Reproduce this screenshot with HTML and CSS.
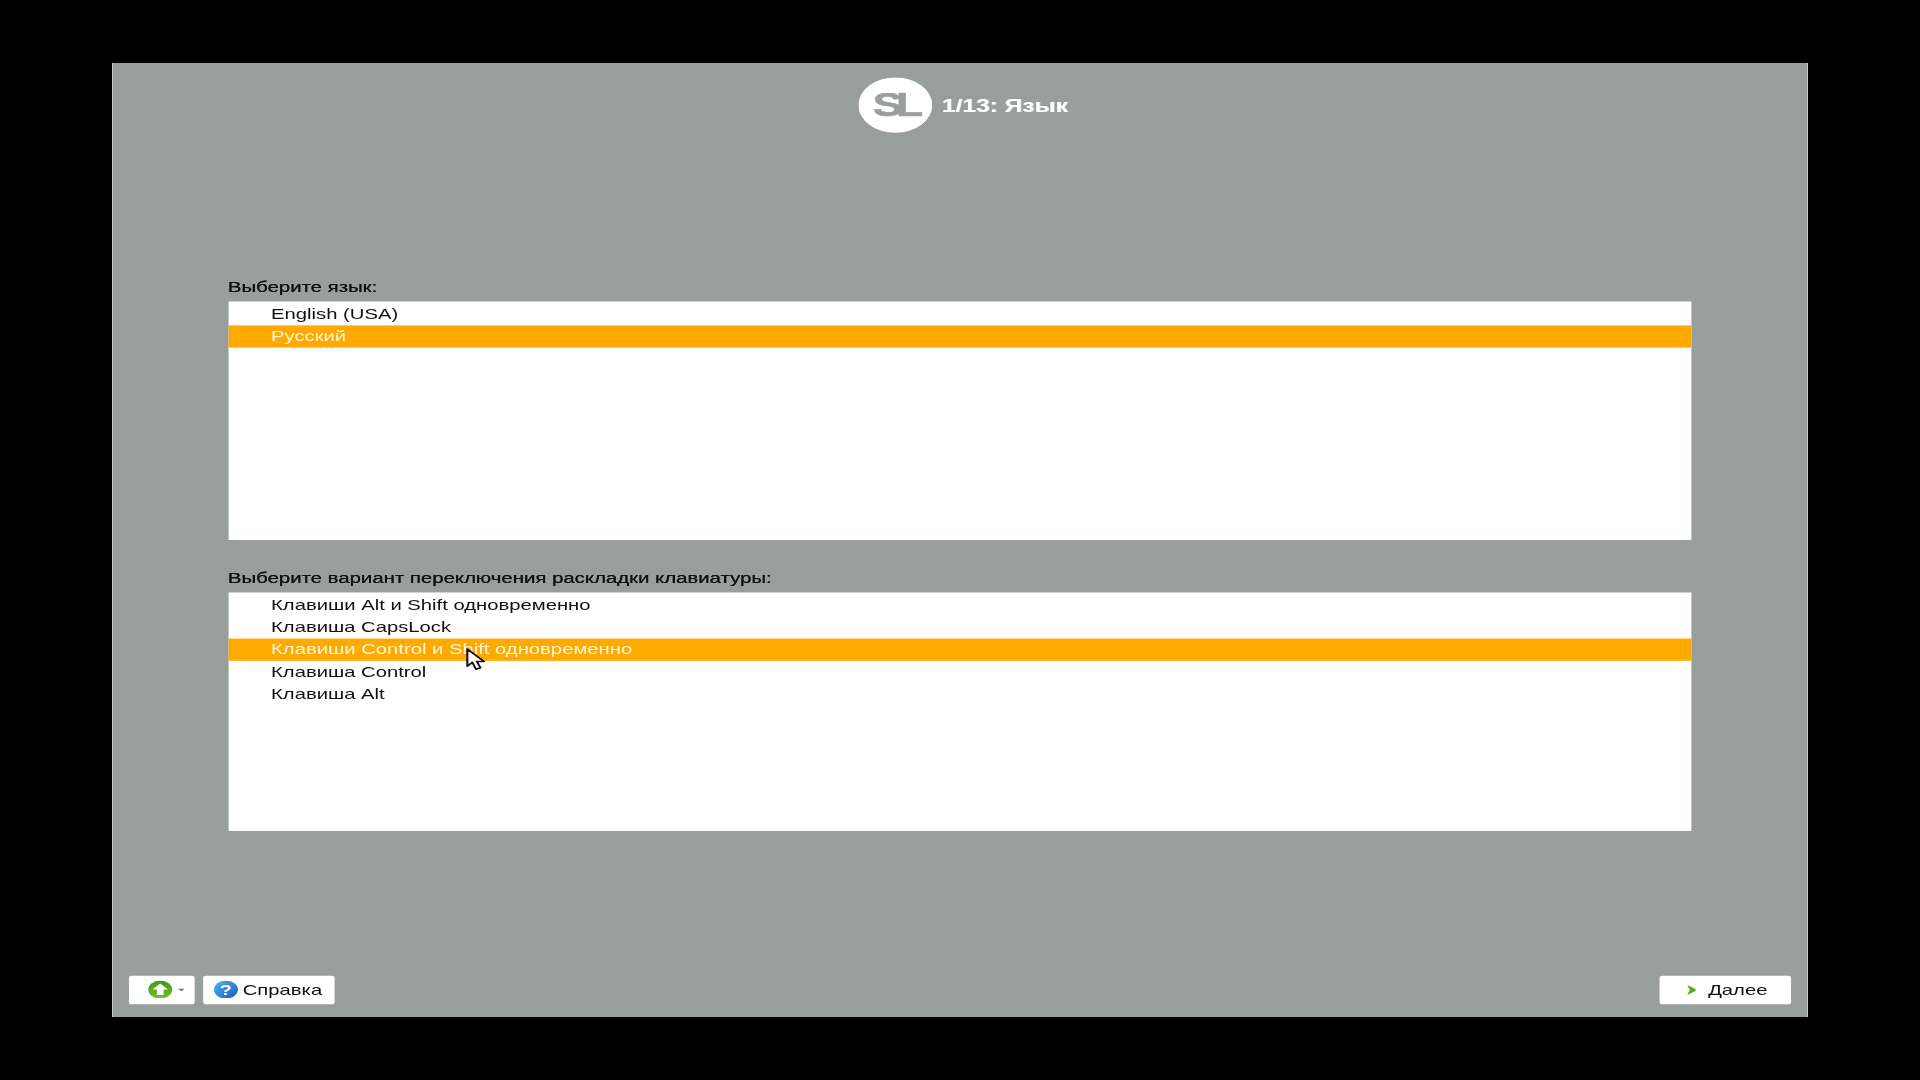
FILE: index.html
```html
<!DOCTYPE html>
<html lang="ru">
<head>
<meta charset="utf-8">
<title>1/13: Язык</title>
<link rel="stylesheet" href="styles.css">
</head>
<body>
<div class="frame">
  <div class="screen">
    <header class="header">
      <svg class="logo" viewBox="0 0 35 35" aria-label="SL">
        <circle cx="17.5" cy="17.5" r="17.4" fill="#fff"/>
        <text x="6.8" y="24.6" class="logo-text">SL</text>
      </svg>
      <h1 class="title">1/13: Язык</h1>
    </header>
    <section class="section section-first">
      <div class="label">Выберите язык:</div>
      <ul class="list">
        <li class="row">English (USA)</li>
        <li class="row selected">Русский</li>
      </ul>
    </section>
    <section class="section section-second">
      <div class="label">Выберите вариант переключения раскладки клавиатуры:</div>
      <ul class="list">
        <li class="row">Клавиши Alt и Shift одновременно</li>
        <li class="row">Клавиша CapsLock</li>
        <li class="row selected">Клавиши Control и Shift одновременно</li>
        <li class="row">Клавиша Control</li>
        <li class="row">Клавиша Alt</li>
      </ul>
    </section>
    <footer class="footer">
      <button class="btn btn-menu">
        <svg class="icon" viewBox="0 0 11 11"><defs><linearGradient id="g" x1="0" y1="0" x2="0" y2="1"><stop offset="0" stop-color="#3f9a12"/><stop offset="1" stop-color="#6cc02a"/></linearGradient></defs><circle cx="5.5" cy="5.5" r="5.4" fill="url(#g)"/><path d="M5.5 1.8 9 5.4H7v3.4H4V5.4H2z" fill="#fff"/></svg>
        <svg class="caret" viewBox="0 0 5 3"><path d="M0 0h5L2.5 3z" fill="#777"/></svg>
      </button>
      <button class="btn btn-help">
        <svg class="icon" viewBox="0 0 11 11"><defs><linearGradient id="b" x1="0" y1="0" x2="1" y2="1"><stop offset="0" stop-color="#58b4ee"/><stop offset="1" stop-color="#0e5fc0"/></linearGradient></defs><circle cx="5.5" cy="5.5" r="5.4" fill="url(#b)"/><text x="5.5" y="8.8" class="q">?</text></svg>
        <span>Справка</span>
      </button>
      <button class="btn btn-next">
        <svg class="chev" viewBox="0 0 6 8"><path d="M0 0 6 4 0 8 1.6 4z" fill="#4fae14"/></svg>
        <span>Далее</span>
      </button>
    </footer>
    <svg class="cursor" viewBox="0 0 9 14"><path d="M.6.6V11.4l2.4-2.4 1.7 4.3 2.1-.9-1.7-4h3.4z" fill="#fff" stroke="#111" stroke-width="1" stroke-linejoin="round"/></svg>
  </div>
</div>
</body>
</html>
```
FILE: styles.css
```css
* { box-sizing: border-box; }
html, body { margin: 0; height: 100%; background: #000; }
body { padding: 63px 112px; overflow: hidden; }
.frame {
  width: 1696px;
  height: 954px;
  background: repeating-conic-gradient(#939996 0 25%, #9ea4a0 0 50%) 0 0 / 2px 2px;
  box-shadow: inset 1px 0 #c5c9c7, inset -1px 0 #c5c9c7;
}
.screen {
  position: relative;
  width: 800px;
  height: 600px;
  display: flex;
  flex-direction: column;
  transform: scale(2.12, 1.59);
  transform-origin: 0 0;
  font-family: "Liberation Sans", Arial, sans-serif;
  font-size: 9.55px;
  color: #111;
  filter: blur(.22px);
}
.header {
  display: flex;
  align-items: center;
  height: 35px;
  margin-top: 9.3px;
  padding-left: 351.5px;
  gap: 4.9px;
}
.logo { width: 35px; height: 35px; flex: none; }
.logo-text {
  font-family: "Liberation Sans", Arial, sans-serif;
  font-weight: 700;
  font-size: 21px;
  letter-spacing: -3px;
  fill: #9a9f9c;
  stroke: #9a9f9c;
  stroke-width: .35px;
}
.title {
  margin: 0;
  font-size: 11.6px;
  font-weight: 700;
  color: #fff;
  text-shadow: .4px 0 0 rgba(255, 255, 240, .5);
}
.section { padding: 0 54.6px; }
.section-first { margin-top: 89.6px; }
.section-second { margin-top: 17.3px; }
.label {
  height: 14px;
  line-height: 14px;
  margin-bottom: 2.2px;
  font-size: 9.62px;
  text-shadow: .15px 0 0 #111;
}
.list {
  list-style: none;
  margin: 0;
  padding: .8px .45px 0;
  height: 149.6px;
  background: #fff;
}
.row {
  height: 14.05px;
  line-height: 13.4px;
  padding-left: 20px;
}
.selected {
  background: #ffaa00;
  color: #fff7d8;
}
.footer {
  display: flex;
  gap: 4.6px;
  margin-top: auto;
  padding: 0 8px 8.2px;
}
.btn {
  display: flex;
  align-items: center;
  height: 18.3px;
  padding: 0;
  border: 0;
  border-radius: 1.5px;
  background: #fff;
  font: inherit;
  color: #111;
}
.btn-menu { width: 30.7px; padding-left: 9.1px; gap: 2.5px; }
.btn-help { width: 61.8px; padding-left: 5px; gap: 1.9px; }
.btn-next { width: 62.5px; margin-left: auto; padding-left: 13px; gap: 5.6px; }
.icon { width: 11.5px; height: 11.5px; flex: none; }
.caret { width: 3.4px; height: 2px; flex: none; }
.chev { width: 4.8px; height: 8px; flex: none; }
.q { font-family: "Liberation Sans", Arial, sans-serif; font-size: 9px; font-weight: 700; fill: #fff; text-anchor: middle; }
.cursor { position: absolute; left: 167.2px; top: 367.8px; width: 9px; height: 14px; }
```
